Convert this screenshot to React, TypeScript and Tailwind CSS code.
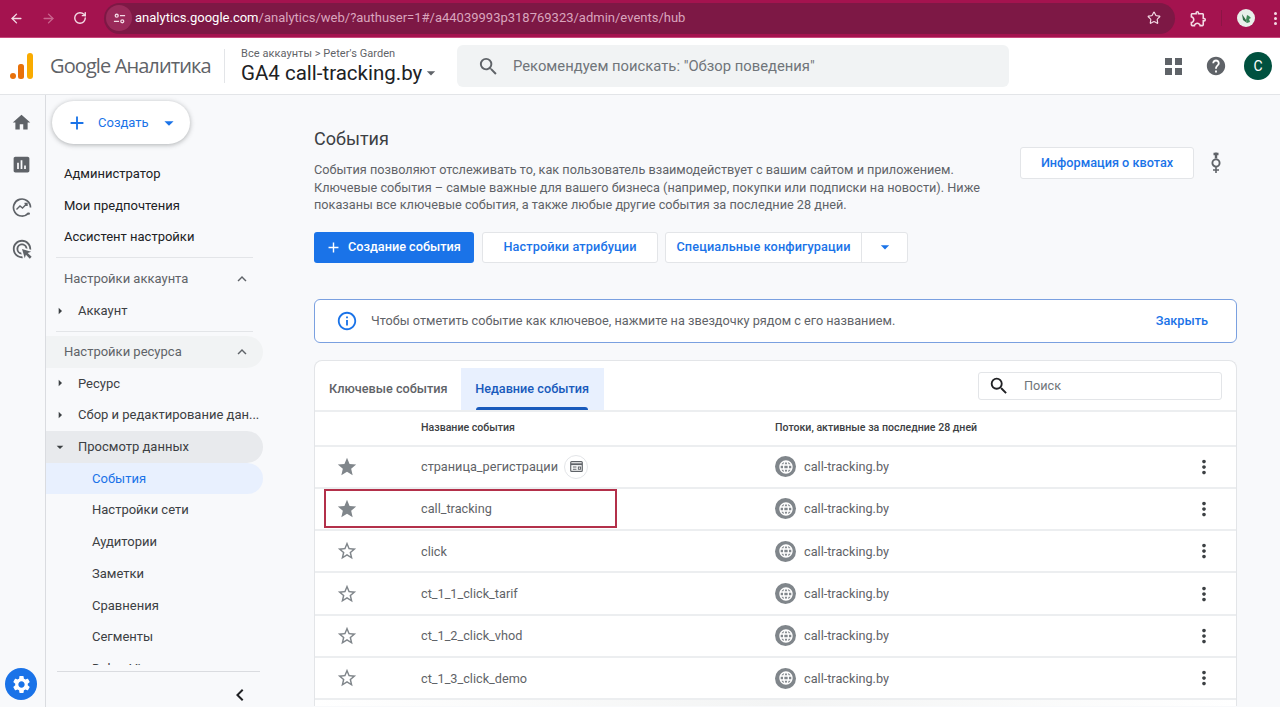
import type { ReactNode } from 'react';
import { ArrowLeft, ArrowRight, RotateCw, Star } from 'lucide-react';
import {
  MdAdd,
  MdArrowDropDown,
  MdArrowRight,
  MdAssessment,
  MdChevronLeft,
  MdExpandLess,
  MdHelp,
  MdHome,
  MdInfoOutline,
  MdLanguage,
  MdMoreVert,
  MdOutlineAdsClick,
  MdOutlineExtension,
  MdSearch,
  MdSettings,
  MdStar,
  MdStarBorder,
} from 'react-icons/md';

const rows = [
  { name: 'страница_регистрации', starred: true, badge: true },
  { name: 'call_tracking', starred: true, outlined: true },
  { name: 'click' },
  { name: 'ct_1_1_click_tarif' },
  { name: 'ct_1_2_click_vhod' },
  { name: 'ct_1_3_click_demo' },
];

function BrowserBar() {
  return (
    <div className="h-[38px] pb-[1px] bg-[#a4134f] flex items-center text-[#f3dbe5] shrink-0 border-b border-[#c9477c]">
      <ArrowLeft className="w-[15px] h-[15px] ml-[9px]" strokeWidth={2.2} />
      <ArrowRight className="w-[15px] h-[15px] ml-[17px] text-[#c9658e]" strokeWidth={2.2} />
      <RotateCw className="w-[14px] h-[14px] ml-[17px]" strokeWidth={2.4} />
      {/* Address field */}
      <div className="ml-[17px] w-[1071px] h-[31px] rounded-full bg-[#7d1845] flex items-center">
        <div className="w-[26px] h-[26px] ml-[2px] rounded-full bg-[#9a2a5a] flex items-center justify-center">
          <svg viewBox="0 0 14 14" className="w-[13px] h-[13px]" fill="none" stroke="currentColor" strokeWidth="1.4">
            <circle cx="4" cy="4" r="1.6" />
            <path d="M7.5 4H13M1 10h5.5" />
            <circle cx="10" cy="10" r="1.6" />
          </svg>
        </div>
        <span className="ml-[3px] text-[13px] text-[#d9a5bd] font-['Roboto',sans-serif] whitespace-nowrap">
          <span className="text-white">analytics.google.com</span>/analytics/web/?authuser=1#/a44039993p318769323/admin/events/hub
        </span>
        <Star className="w-[14px] h-[14px] ml-auto mr-[14px]" strokeWidth={2} />
      </div>
      <MdOutlineExtension className="w-[19px] h-[19px] ml-[14px]" />
      <div className="w-px h-[16px] bg-[#8c1545] ml-[13px]" />
      {/* Profile picture, a small plant on white */}
      <svg viewBox="0 0 18 18" className="w-[18px] h-[18px] ml-[15px]">
        <circle cx="9" cy="9" r="9" fill="#e8f0ea" />
        <path d="M5 5l4 6 1 3-4-3z" fill="#2f6b45" />
        <path d="M9 11l1-5 2 1 2 2-2 1 1 3-3 1z" fill="#3f8a58" />
      </svg>
      <div className="ml-[19px] flex flex-col gap-[2px]">
        <span className="w-[3px] h-[3px] rounded-full bg-[#f3dbe5]" />
        <span className="w-[3px] h-[3px] rounded-full bg-[#f3dbe5]" />
        <span className="w-[3px] h-[3px] rounded-full bg-[#f3dbe5]" />
      </div>
    </div>
  );
}

function AppHeader() {
  return (
    <header className="h-[57px] bg-white border-b border-[#e3e5e8] flex items-center shrink-0">
      {/* Logo */}
      <svg viewBox="0 0 23 26" className="w-[23px] h-[26px] ml-[10px] shrink-0">
        <circle cx="3" cy="23" r="3" fill="#e8710a" />
        <rect x="8" y="11" width="6" height="15" rx="2.5" fill="#e8710a" />
        <rect x="17" y="0" width="6" height="26" rx="3" fill="#f9ab00" />
      </svg>
      <span className="ml-[17px] text-[20px] text-[#5f6368] font-['Open_Sans',sans-serif] tracking-[-0.045em] whitespace-nowrap w-[166px]">
        Google Аналитика
      </span>
      <div className="w-px h-[34px] bg-[#e3e5e8] ml-[8px]" />
      <div className="ml-[16px] w-[216px] font-['Roboto',sans-serif]">
        <div className="text-[11px] leading-[13px] tracking-[0.005em] text-[#5f6368] whitespace-nowrap">Все аккаунты &gt; Peter's Garden</div>
        <div className="flex items-center text-[20.5px] leading-[26px] text-[#202124] whitespace-nowrap">
          GA4 call-tracking.by
          <MdArrowDropDown className="w-[20px] h-[20px] text-[#5f6368] -ml-[1px]" />
        </div>
      </div>
      {/* Search */}
      <div className="w-[552px] h-[42px] rounded-md bg-[#f1f3f4] flex items-center font-['Roboto',sans-serif]">
        <MdSearch className="w-[23px] h-[23px] ml-[20px] text-[#5f6368]" />
        <span className="ml-[13px] text-[14.8px] text-[#70757a]">Рекомендуем поискать: "Обзор поведения"</span>
      </div>
      <div className="ml-auto flex items-center">
        <div className="grid grid-cols-2 gap-[3px]">
          <span className="w-[7px] h-[7px] bg-[#5f6368]" />
          <span className="w-[7px] h-[7px] bg-[#5f6368]" />
          <span className="w-[7px] h-[7px] bg-[#5f6368]" />
          <span className="w-[7px] h-[7px] bg-[#5f6368]" />
        </div>
        <MdHelp className="w-[22px] h-[22px] ml-[23px] text-[#5f6368]" />
        <div className="w-[28px] h-[28px] ml-[17px] mr-[8px] rounded-full bg-[#00513f] text-white text-[14px] font-['Roboto',sans-serif] flex items-center justify-center">
          C
        </div>
      </div>
    </header>
  );
}

function IconRail() {
  return (
    <div className="w-[46px] shrink-0 border-r border-[#dadce0] flex flex-col items-center pr-[2px] relative">
      <MdHome className="w-[21px] h-[21px] mt-[17px] text-[#5f6368]" />
      <MdAssessment className="w-[21px] h-[21px] mt-[21px] text-[#5f6368]" />
      <svg viewBox="0 0 20 20" className="w-[20px] h-[20px] mt-[22px] text-[#5f6368]" fill="none" stroke="currentColor" strokeWidth="1.7">
        <path d="M16.5 16A8.5 8.5 0 1 1 18.5 10.5" />
        <path d="M4.5 12.5 8 9l2.5 2L15 6.5M12.5 6.5H15V9" strokeWidth="1.4" />
        <circle cx="16.8" cy="16.6" r="1.2" fill="currentColor" stroke="none" />
      </svg>
      <MdOutlineAdsClick className="w-[22px] h-[22px] mt-[21px] text-[#5f6368]" />
      {/* Admin gear stays pinned to the bottom of the rail */}
      <div className="absolute left-[5px] bottom-[7px] w-[32px] h-[32px] rounded-full bg-[#1a73e8] flex items-center justify-center">
        <MdSettings className="w-[21px] h-[21px] text-white" />
      </div>
    </div>
  );
}

function NavRow({ children, className = '' }: { children: ReactNode; className?: string }) {
  return <div className={`h-[31.7px] flex items-center text-[13px] whitespace-nowrap ${className}`}>{children}</div>;
}

function TreeRow({ label, open, active }: { label: string; open?: boolean; active?: boolean }) {
  return (
    <NavRow className={`text-[#3c4043] rounded-r-full ${active ? 'bg-[#e8eaed]' : ''}`}>
      {open ? (
        <MdArrowDropDown className="w-[16px] h-[16px] ml-[6px] text-[#3c4043]" />
      ) : (
        <MdArrowRight className="w-[16px] h-[16px] ml-[6px] text-[#3c4043]" />
      )}
      <span className="ml-[10px]">{label}</span>
    </NavRow>
  );
}

function Sidebar() {
  return (
    <aside className="w-[217px] shrink-0 flex flex-col font-['Roboto',sans-serif]">
      {/* Create button */}
      <div className="ml-[6px] mt-[6px] w-[138px] h-[43px] rounded-full bg-white shadow-[0_1px_5px_rgba(60,64,67,0.4)] flex items-center text-[#1a73e8] shrink-0">
        <MdAdd className="w-[22px] h-[22px] ml-[14px]" />
        <span className="ml-[10px] text-[13px]">Создать</span>
        <MdArrowDropDown className="w-[22px] h-[22px] ml-[9px]" />
      </div>
      {/* The list scrolls in the real app, so the last row is cut off */}
      <div className="pt-[14px] h-[520.5px] overflow-hidden shrink-0">
        <NavRow className="pl-[18px] text-[#202124]">Администратор</NavRow>
        <NavRow className="pl-[18px] text-[#202124]">Мои предпочтения</NavRow>
        <NavRow className="pl-[18px] text-[#202124]">Ассистент настройки</NavRow>
        <div className="h-px bg-[#e3e5e8] mx-[10px] mt-[4px] mb-[5px]" />
        <NavRow className="pl-[18px] pr-[12px] text-[#5f6368] justify-between">
          Настройки аккаунта
          <MdExpandLess className="w-[18px] h-[18px]" />
        </NavRow>
        <TreeRow label="Аккаунт" />
        <div className="h-px bg-[#e3e5e8] mx-[10px] mt-[5px] mb-[3.5px]" />
        <NavRow className="pl-[18px] pr-[12px] text-[#5f6368] justify-between rounded-r-full bg-[#f1f3f4]">
          Настройки ресурса
          <MdExpandLess className="w-[18px] h-[18px]" />
        </NavRow>
        <TreeRow label="Ресурс" />
        <TreeRow label="Сбор и редактирование дан..." />
        <TreeRow label="Просмотр данных" open active />
        <NavRow className="pl-[46px] text-[#1a73e8] bg-[#e8f0fe] rounded-r-full">События</NavRow>
        <NavRow className="pl-[46px] text-[#3c4043]">Настройки сети</NavRow>
        <NavRow className="pl-[46px] text-[#3c4043]">Аудитории</NavRow>
        <NavRow className="pl-[46px] text-[#3c4043]">Заметки</NavRow>
        <NavRow className="pl-[46px] text-[#3c4043]">Сравнения</NavRow>
        <NavRow className="pl-[46px] text-[#3c4043]">Сегменты</NavRow>
        <NavRow className="pl-[46px] text-[#3c4043]">DebugView</NavRow>
      </div>
      <div className="h-px bg-[#dadce0] ml-[11px] mr-[3px] mt-[6px] shrink-0" />
      <div className="flex justify-end pr-[11px] pt-[11px]">
        <MdChevronLeft className="w-[24px] h-[24px] text-[#202124]" />
      </div>
    </aside>
  );
}

function ActionButtons() {
  return (
    <div className="flex gap-[7px] mt-[18px] text-[12.7px]">
      <div className="w-[160px] h-[31px] rounded-[3px] bg-[#1a73e8] text-white flex items-center">
        <MdAdd className="w-[17px] h-[17px] ml-[11px]" />
        <span className="ml-[6px] font-medium">Создание события</span>
      </div>
      <div className="w-[176px] h-[31px] ml-px rounded-[3px] bg-white border border-[#e3e5e8] text-[#1a73e8] font-medium tracking-[0.01em] flex items-center justify-center">
        Настройки атрибуции
      </div>
      <div className="h-[31px] rounded-[3px] bg-white border border-[#e3e5e8] text-[#1a73e8] font-medium tracking-[0.01em] flex items-center">
        <span className="w-[195px] text-center">Специальные конфигурации</span>
        <div className="w-[46px] h-full border-l border-[#e3e5e8] flex items-center justify-center">
          <MdArrowDropDown className="w-[20px] h-[20px]" />
        </div>
      </div>
    </div>
  );
}

function EventRow({ row }: { row: (typeof rows)[number] }) {
  const StarIcon = row.starred ? MdStar : MdStarBorder;
  return (
    <div className="h-[42.3px] shrink-0 border-t-2 border-[#eceef0] flex items-center relative">
      {/* Highlight drawn on top of the second row */}
      {row.outlined && (
        <div className="absolute left-[9px] top-[0px] w-[293px] h-[39px] border-2 border-[#b3304a]" />
      )}
      <StarIcon className="w-[22px] h-[22px] ml-[21px] text-[#80868b]" />
      <span className="absolute left-[106px] text-[12.7px] text-[#5f6368] flex items-center">
        {row.name}
        {row.badge && (
          <span className="w-[24px] h-[24px] ml-[6px] rounded-full border border-[#e3e5e8] flex items-center justify-center">
            <svg viewBox="0 0 14 12" className="w-[13px] h-[11px] text-[#5f6368]" fill="none" stroke="currentColor" strokeWidth="1.3">
              <rect x="0.7" y="0.7" width="12.6" height="10.6" rx="1" />
              <path d="M1 3.5h12" strokeWidth="2" />
              <path d="M3 6.5h4M3 9h4M9 6.5h2.5v2.5H9z" strokeWidth="1.1" />
            </svg>
          </span>
        )}
      </span>
      <span className="absolute left-[460px] flex items-center text-[12.7px] text-[#5f6368]">
        <span className="w-[21px] h-[21px] rounded-full bg-[#80868b] flex items-center justify-center">
          <MdLanguage className="w-[16px] h-[16px] text-white" />
        </span>
        <span className="ml-[8px]">call-tracking.by</span>
      </span>
      <MdMoreVert className="w-[22px] h-[22px] ml-auto mr-[21px] text-[#3c4043]" />
    </div>
  );
}

function EventsCard() {
  return (
    <div className="mt-[17px] w-[923px] rounded-t-[8px] bg-white border border-[#e3e5e8] border-b-0">
      {/* Tabs */}
      <div className="h-[49px] flex items-center text-[12.7px] relative">
        <div className="ml-[14px] text-[#5f6368] font-medium mt-[8px]">Ключевые события</div>
        <div className="ml-[13px] w-[143px] h-[42px] mt-[7px] bg-[#e8f0fe] text-[#185abc] font-medium flex items-center justify-center relative">
          Недавние события
          <span className="absolute bottom-0 left-[15px] right-[16px] h-[3px] rounded-t-[3px] bg-[#185abc]" />
        </div>
        <div className="ml-auto mr-[14px] mt-[1px] w-[244px] h-[28px] rounded-[3px] border border-[#e3e5e8] flex items-center">
          <MdSearch className="w-[22px] h-[22px] ml-[9px] text-[#202124]" />
          <span className="ml-[14px] text-[12.7px] text-[#70757a]">Поиск</span>
        </div>
      </div>
      {/* Column titles */}
      <div className="h-[35px] border-t-2 border-[#eceef0] relative flex items-center text-[10.6px] font-medium text-[#3c4043]">
        <span className="absolute left-[106px]">Название события</span>
        <span className="absolute left-[460px]">Потоки, активные за последние 28 дней</span>
      </div>
      {rows.map((row) => (
        <EventRow key={row.name} row={row} />
      ))}
      <div className="border-t-2 border-[#eceef0] h-[8px] bg-gradient-to-r from-white via-[#f3f4f4] to-white" />
    </div>
  );
}

export default function App() {
  return (
    <div className="w-[1280px] h-[707px] overflow-hidden flex flex-col bg-[#f8f9fb]">
      <BrowserBar />
      <AppHeader />
      <div className="flex flex-1 min-h-0">
        <IconRail />
        <Sidebar />
        <main className="flex-1 pl-[51px] pt-[32px] font-['Roboto',sans-serif] overflow-hidden">
          <div className="flex">
            <div className="w-[680px]">
              <h1 className="text-[18px] leading-[24px] text-[#3c4043]">События</h1>
              <p className="mt-[10px] text-[12.7px] leading-[17.5px] text-[#5f6368] whitespace-nowrap">
                События позволяют отслеживать то, как пользователь взаимодействует с вашим сайтом и приложением.
                <br />
                Ключевые события – самые важные для вашего бизнеса (например, покупки или подписки на новости). Ниже
                <br />
                показаны все ключевые события, а также любые другие события за последние 28 дней.
              </p>
            </div>
            <div className="ml-[26px] mt-[20px] w-[174px] h-[32px] rounded-[3px] bg-white border border-[#e3e5e8] text-[12.7px] font-medium text-[#1a73e8] flex items-center justify-center">
              Информация о квотах
            </div>
            {/* Small overflow glyph next to the quota button */}
            <svg viewBox="0 0 12 24" className="ml-[16px] mt-[24px] w-[12px] h-[24px] text-[#5f6368]" fill="none" stroke="currentColor" strokeWidth="1.6">
              <path d="M6 1.5v6M3.5 3h5" strokeWidth="2.4" />
              <circle cx="6" cy="12" r="3.6" strokeWidth="1.9" />
              <path d="M6 16v6M3 19h6" />
            </svg>
          </div>
          <ActionButtons />
          {/* Hint banner */}
          <div className="mt-[36px] w-[923px] h-[44px] rounded-[6px] bg-white border border-[#7aa0e0] flex items-center text-[12.7px]">
            <MdInfoOutline className="w-[22px] h-[22px] ml-[21px] text-[#1a73e8]" />
            <span className="ml-[13px] text-[#5f6368]">
              Чтобы отметить событие как ключевое, нажмите на звездочку рядом с его названием.
            </span>
            <span className="ml-auto mr-[28px] font-medium text-[#1a73e8]">Закрыть</span>
          </div>
          <EventsCard />
        </main>
      </div>
    </div>
  );
}
